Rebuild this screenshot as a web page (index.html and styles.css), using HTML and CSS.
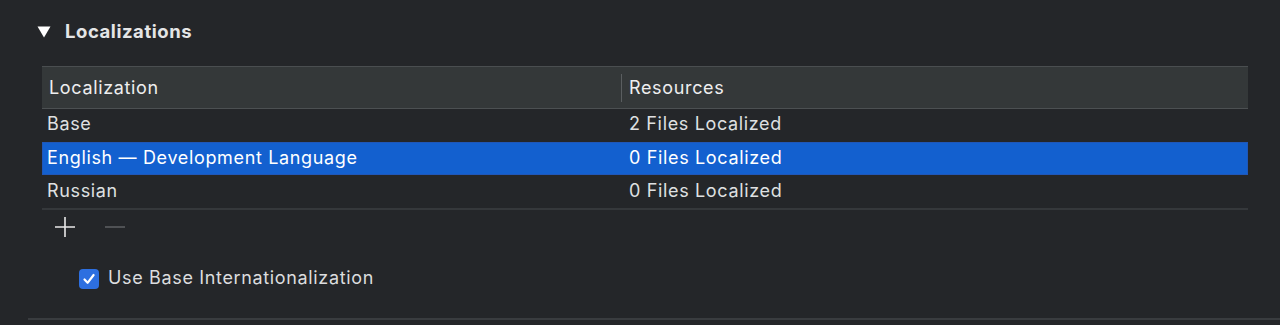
FILE: index.html
```html
<!DOCTYPE html>
<html>
<head>
<meta charset="utf-8">
<link rel="stylesheet" href="styles.css">
</head>
<body>
<div class="page">
  <div class="title-row">
    <svg class="disclosure" width="14" height="12" viewBox="0 0 14 12"><path d="M0.5 0.5 H13.5 L7 11.5 Z" fill="#ffffff"/></svg>
    <span class="title">Localizations</span>
  </div>
  <div class="table">
    <div class="header">
      <div class="cell col1">Localization</div>
      <div class="divider"></div>
      <div class="cell col2">Resources</div>
    </div>
    <div class="row">
      <div class="cell col1">Base</div>
      <div class="cell col2">2 Files Localized</div>
    </div>
    <div class="row selected">
      <div class="cell col1">English — Development Language</div>
      <div class="cell col2">0 Files Localized</div>
    </div>
    <div class="row">
      <div class="cell col1">Russian</div>
      <div class="cell col2">0 Files Localized</div>
    </div>
  </div>
  <div class="controls">
    <svg class="btn" width="22" height="22" viewBox="0 0 22 22"><path d="M11 1 V21 M1 11 H21" stroke="#e8e8e8" stroke-width="1.6"/></svg>
    <svg class="btn" width="22" height="22" viewBox="0 0 22 22"><path d="M1 11 H21" stroke="#5a5d60" stroke-width="1.6"/></svg>
  </div>
  <label class="check-row">
    <span class="checkbox"><svg width="20" height="20" viewBox="0 0 20 20"><path d="M5.5 10.5 L8.6 13.8 L14.6 6" stroke="#ffffff" stroke-width="2.2" fill="none" stroke-linecap="round" stroke-linejoin="round"/></svg></span>
    <span class="check-label">Use Base Internationalization</span>
  </label>
  <div class="footer-line"></div>
</div>
</body>
</html>
```
FILE: styles.css
```css
html, body {
  margin: 0;
  padding: 0;
  background: #242629;
}
body {
  width: 1280px;
  height: 325px;
  overflow: hidden;
  font-family: Inter, "Noto Sans", "Liberation Sans", sans-serif;
  color: #dfe0e1;
}
.page {
  display: flex;
  flex-direction: column;
}
.title-row {
  display: flex;
  align-items: center;
  height: 62px;
  padding-left: 37px;
  gap: 14px;
}
.disclosure {
  display: block;
  margin-top: 1px;
}
.title {
  font-size: 18.5px;
  font-weight: 700;
  color: #e4e5e6;
  letter-spacing: 0.55px;
}
.table {
  margin: 4px 32px 0 42px;
  border-bottom: 2px solid #35383b;
}
.header {
  display: flex;
  align-items: center;
  height: 41px;
  background: #343839;
  border-top: 1px solid #4a4e50;
  border-bottom: 1px solid #4c5052;
  color: #eeeeef;
}
.cell {
  font-size: 18px;
  letter-spacing: 0.65px;
  white-space: nowrap;
  line-height: 22px;
}
.header .col1 {
  width: 572px;
  padding-left: 7px;
}
.divider {
  width: 1px;
  height: 28px;
  background: #5a5e60;
  margin-right: 7px;
}
.row {
  display: flex;
  align-items: center;
  height: 33px;
}
.row .cell {
  margin-top: -3px;
}
.row .col1 {
  width: 582px;
  padding-left: 5px;
}
.row.selected {
  background: #1360cf;
  box-shadow: inset 0 0 0 1px #2057b8;
  color: #ffffff;
}
.row.selected .cell {
  margin-top: -2px;
}
.row:last-child .cell {
  margin-top: -1px;
}
.controls {
  display: flex;
  align-items: center;
  gap: 28px;
  height: 34px;
  padding-left: 54px;
}
.btn {
  display: block;
}
.check-row {
  display: flex;
  align-items: center;
  gap: 9px;
  height: 64px;
  padding-left: 79px;
  margin-top: 3px;
}
.checkbox {
  width: 20px;
  height: 20px;
  border-radius: 4px;
  background: #2d6fe0;
  display: block;
}
.checkbox svg {
  display: block;
}
.check-label {
  font-size: 18px;
  letter-spacing: 0.65px;
  color: #dcdddf;
  margin-top: -4px;
}
.footer-line {
  margin-left: 28px;
  margin-top: 7px;
  height: 2px;
  background: #393c3f;
}
```
